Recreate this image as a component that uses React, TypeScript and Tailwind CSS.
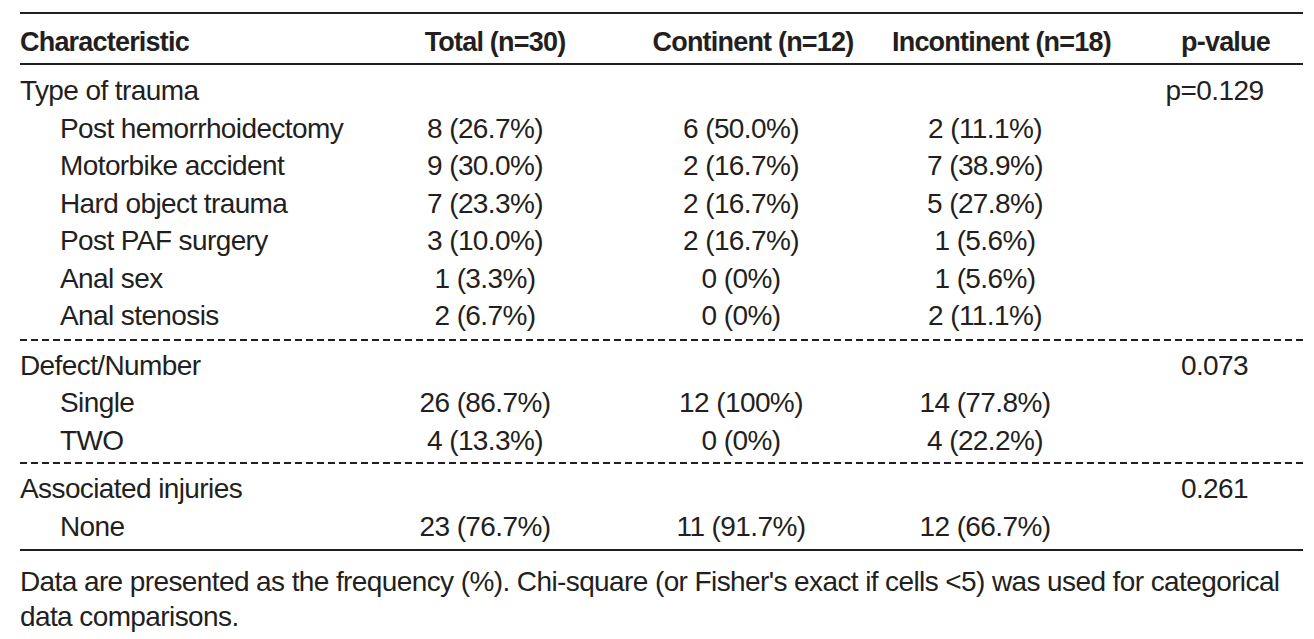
const rows1 = [
  ['Post hemorrhoidectomy', '8 (26.7%)', '6 (50.0%)', '2 (11.1%)'],
  ['Motorbike accident', '9 (30.0%)', '2 (16.7%)', '7 (38.9%)'],
  ['Hard object trauma', '7 (23.3%)', '2 (16.7%)', '5 (27.8%)'],
  ['Post PAF surgery', '3 (10.0%)', '2 (16.7%)', '1 (5.6%)'],
  ['Anal sex', '1 (3.3%)', '0 (0%)', '1 (5.6%)'],
  ['Anal stenosis', '2 (6.7%)', '0 (0%)', '2 (11.1%)'],
]

const rows2 = [
  ['Single', '26 (86.7%)', '12 (100%)', '14 (77.8%)'],
  ['TWO', '4 (13.3%)', '0 (0%)', '4 (22.2%)'],
]

const rows3 = [['None', '23 (76.7%)', '11 (91.7%)', '12 (66.7%)']]

const cols = 'grid grid-cols-[340px_250px_262px_226px_1fr]'

function Row({ cells }: { cells: string[] }) {
  return (
    <div className={`${cols} leading-[37.5px]`}>
      <div className="pl-10 whitespace-nowrap">{cells[0]}</div>
      <div className="text-center whitespace-nowrap">{cells[1]}</div>
      <div className="text-center whitespace-nowrap">{cells[2]}</div>
      <div className="text-center whitespace-nowrap">{cells[3]}</div>
      <div />
    </div>
  )
}

function GroupRow({ label, p }: { label: string; p: string }) {
  return (
    <div className={`${cols} leading-[37.5px]`}>
      <div className="whitespace-nowrap">{label}</div>
      <div />
      <div />
      <div />
      <div className="pl-7 text-center whitespace-nowrap">{p}</div>
    </div>
  )
}

function Dashed() {
  return (
    <div className="h-[2px] bg-[image:repeating-linear-gradient(90deg,#231f20_0_7px,transparent_7px_11px)]" />
  )
}

export default function App() {
  return (
    <div className="h-[639px] w-[1314px] overflow-hidden bg-white pl-5 pr-[11px] pt-3 font-['Liberation_Sans',Arial,sans-serif] text-[28px] tracking-[-0.6px] text-[#231f20]">
      <div className="border-y-2 border-[#231f20]">
        <div className={`${cols} h-[49px] items-center pt-2 text-[27px] font-bold tracking-[-0.8px]`}>
          <div>Characteristic</div>
          <div className="pl-5 text-center whitespace-nowrap">Total (n=30)</div>
          <div className="pl-6 text-center whitespace-nowrap">Continent (n=12)</div>
          <div className="pl-5 whitespace-nowrap">Incontinent (n=18)</div>
          <div className="pl-[50px] text-center whitespace-nowrap">p-value</div>
        </div>
      </div>

      <div className="pb-1 pt-[7px]">
        <GroupRow label="Type of trauma" p="p=0.129" />
        {rows1.map((r) => (
          <Row key={r[0]} cells={r} />
        ))}
      </div>
      <Dashed />

      <div className="pb-[3px] pt-[6px]">
        <GroupRow label="Defect/Number" p="0.073" />
        {rows2.map((r) => (
          <Row key={r[0]} cells={r} />
        ))}
      </div>
      <Dashed />

      <div className="border-b-2 border-[#231f20] pb-1 pt-[6px]">
        <GroupRow label="Associated injuries" p="0.261" />
        {rows3.map((r) => (
          <Row key={r[0]} cells={r} />
        ))}
      </div>

      <p className="mt-[13px] whitespace-nowrap leading-[35px]">
        Data are presented as the frequency (%). Chi-square (or Fisher's exact if cells &lt;5) was used for categorical
        <br />
        data comparisons.
      </p>
    </div>
  )
}
